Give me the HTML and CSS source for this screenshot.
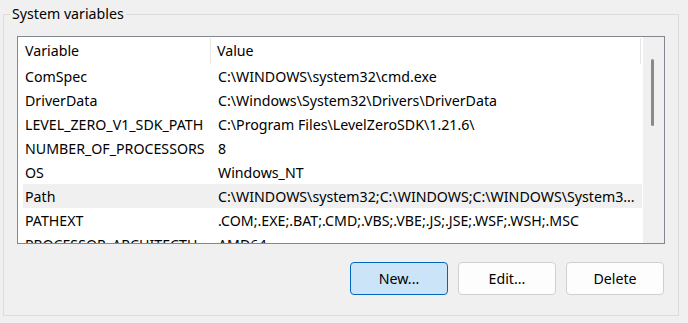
FILE: index.html
```html
<!DOCTYPE html>
<html>
<head>
<meta charset="utf-8">
<link rel="stylesheet" href="styles.css">
</head>
<body>
<fieldset class="group">
  <legend class="group-title">System variables</legend>
  <div class="list">
    <div class="list-body">
      <div class="header">
        <div class="hcell hvar">Variable</div>
        <div class="hcell hval">Value</div>
      </div>
      <div class="row"><span class="c1">ComSpec</span><span class="c2">C:\WINDOWS\system32\cmd.exe</span></div>
      <div class="row"><span class="c1">DriverData</span><span class="c2">C:\Windows\System32\Drivers\DriverData</span></div>
      <div class="row"><span class="c1">LEVEL_ZERO_V1_SDK_PATH</span><span class="c2">C:\Program Files\LevelZeroSDK\1.21.6\</span></div>
      <div class="row"><span class="c1">NUMBER_OF_PROCESSORS</span><span class="c2">8</span></div>
      <div class="row"><span class="c1">OS</span><span class="c2">Windows_NT</span></div>
      <div class="row row-hover"><span class="c1">Path</span><span class="c2">C:\WINDOWS\system32;C:\WINDOWS;C:\WINDOWS\System3...</span></div>
      <div class="row"><span class="c1">PATHEXT</span><span class="c2">.COM;.EXE;.BAT;.CMD;.VBS;.VBE;.JS;.JSE;.WSF;.WSH;.MSC</span></div>
      <div class="row"><span class="c1">PROCESSOR_ARCHITECTU...</span><span class="c2">AMD64</span></div>
    </div>
    <div class="scrollbar"><div class="thumb"></div></div>
  </div>
  <div class="buttons">
    <button class="btn btn-default">New...</button>
    <button class="btn">Edit...</button>
    <button class="btn">Delete</button>
  </div>
</fieldset>
</body>
</html>
```
FILE: styles.css
```css
html, body {
  margin: 0;
  padding: 0;
  background: #f0f0f0;
}
body {
  font-family: "Noto Sans", "Open Sans", sans-serif;
  font-size: 14.2px;
  color: #000;
  width: 688px;
  height: 323px;
  overflow: hidden;
}
.group {
  box-sizing: border-box;
  width: 676px;
  height: 312px;
  margin: 4px 0 0 3px;
  padding: 12px 13px 0 13px;
  border: 1px solid #dcdcdc;
  min-width: 0;
}
.group-title {
  padding: 0 2px;
  margin-left: -7px;
  line-height: 20px;
  font-size: 14.2px;
}
.list {
  box-sizing: border-box;
  width: 648px;
  height: 208px;
  border: 1px solid #828790;
  background: #fff;
  display: flex;
  overflow: hidden;
}
.list-body {
  flex: 1;
  min-width: 0;
  padding-left: 5px;
  overflow: hidden;
}
.header {
  display: grid;
  grid-template-columns: 188px 430px;
  height: 27px;
}
.hcell {
  display: flex;
  align-items: center;
  padding-bottom: 1px;
  white-space: nowrap;
}
.hvar {
  padding-left: 2px;
  border-right: 1px solid #e5e5e5;
  margin: 1px 0 0 0;
}
.hval {
  padding-left: 6px;
  border-right: 1px solid #e5e5e5;
  margin-top: 1px;
}
.row {
  display: grid;
  grid-template-columns: 189px 429px;
  height: 24px;
  align-items: center;
  white-space: nowrap;
}
.row-hover {
  background: #f0f0f0;
}
.c1 {
  padding-left: 2px;
  overflow: hidden;
}
.c2 {
  padding-left: 6px;
  overflow: hidden;
}
.scrollbar {
  width: 21px;
  margin-left: 1px;
  background: #f0f0f0;
  padding-top: 22px;
  box-sizing: border-box;
}
.thumb {
  width: 3px;
  height: 67px;
  margin-left: 8px;
  background: #8a8a8a;
  border-radius: 2px;
}
.buttons {
  display: flex;
  justify-content: flex-end;
  gap: 10px;
  margin-top: 18px;
  padding-right: 1px;
}
.btn {
  box-sizing: border-box;
  width: 98px;
  height: 33px;
  font-family: inherit;
  font-size: 14.2px;
  color: #000;
  background: #fdfdfd;
  border: 1px solid #d0d0d0;
  border-radius: 4px;
  padding: 0;
}
.btn-default {
  background: #cce4f7;
  border-color: #0067c0;
}
```
